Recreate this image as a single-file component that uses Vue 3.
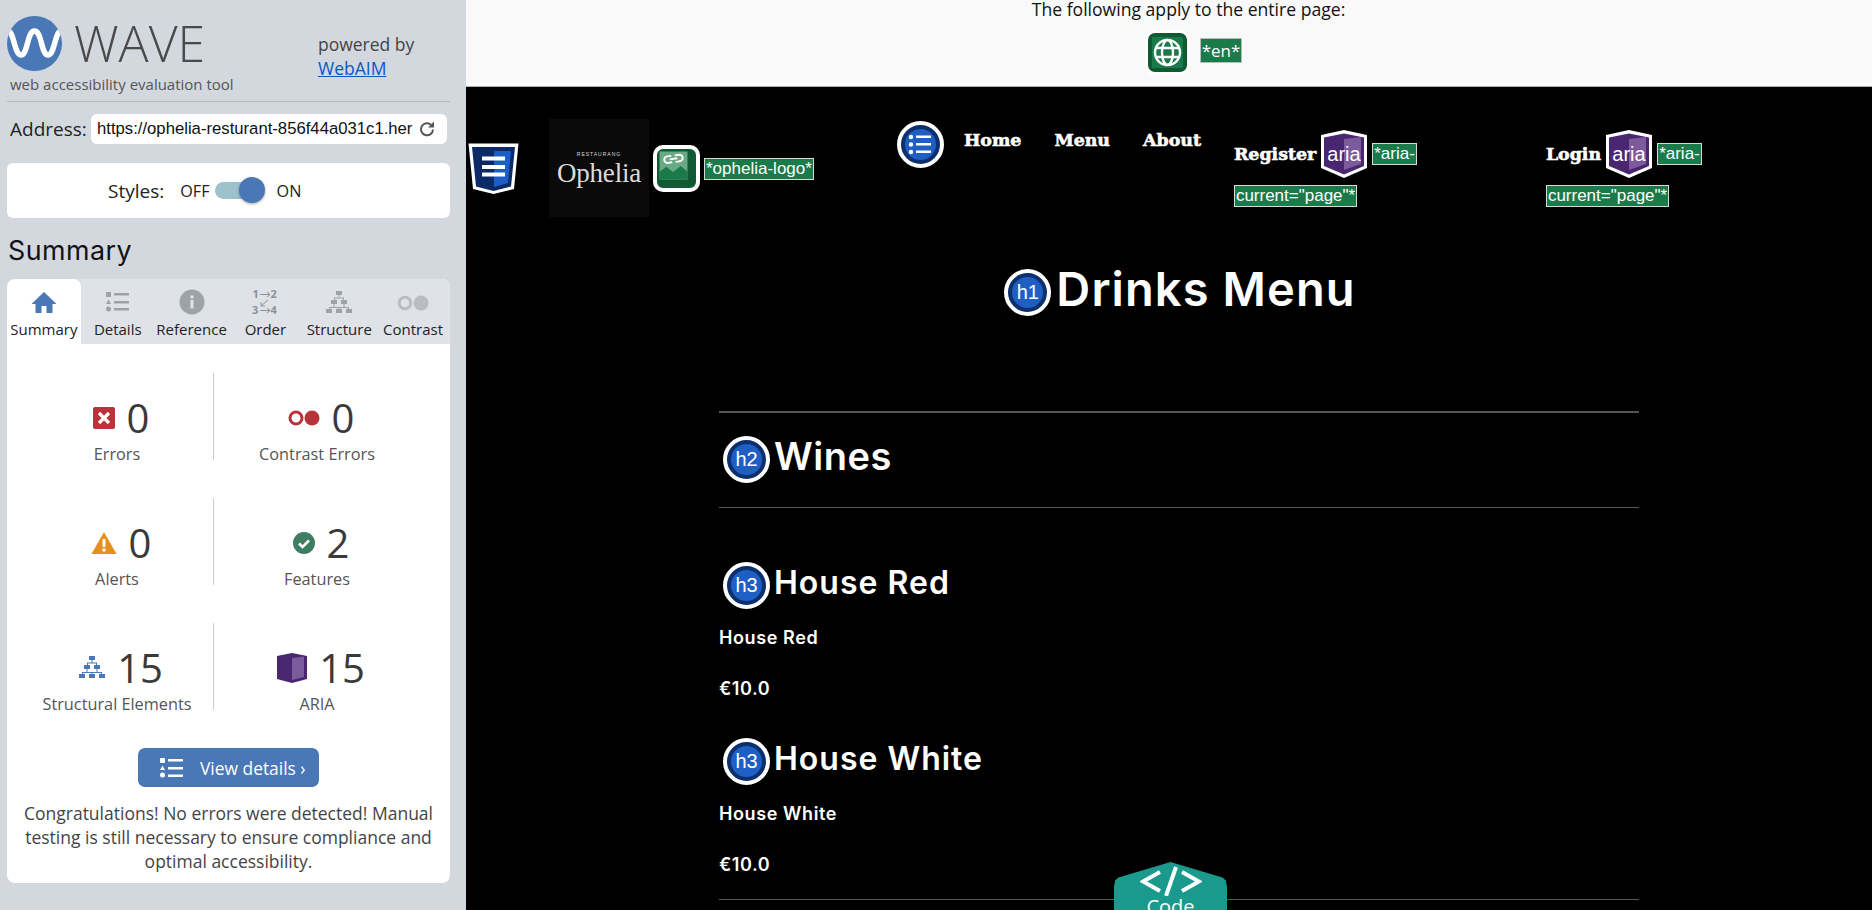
<script setup>
const tabs = ['Summary', 'Details', 'Reference', 'Order', 'Structure', 'Contrast']
</script>

<template>
  <div class="app">
    <aside class="sidebar">
      <div class="brand">
        <div class="brand-left">
          <div class="logo-row">
            <svg class="wave-logo" width="55" height="55" viewBox="0 0 55 55">
              <defs><clipPath id="wc"><circle cx="27.5" cy="27.5" r="27.5" /></clipPath></defs>
              <circle cx="27.5" cy="27.5" r="27.5" fill="#4a77b5" />
              <path clip-path="url(#wc)" d="M0 15 C7 13 7 39 14 39 C21 39 20 15 27.5 15 C35 15 34 39 41 39 C48 39 48 13 55 15" fill="none" stroke="#fff" stroke-width="5.5" />
            </svg>
            <span class="wave-name">WAVE</span>
          </div>
          <div class="tagline">web accessibility evaluation tool</div>
        </div>
        <div class="powered">powered by<br /><a href="#">WebAIM</a></div>
      </div>
      <div class="address-row">
        <span class="address-label">Address:</span>
        <div class="address-box">
          <span class="address-url">https://ophelia-resturant-856f44a031c1.her</span>
          <svg width="18" height="18" viewBox="0 0 18 18"><path d="M15 9.500a6 6 0 1 1-1.900-4.600" fill="none" stroke="#555" stroke-width="2" /><path d="M16 1.500v6h-6z" fill="#555" /></svg>
        </div>
      </div>
      <div class="styles-card">
        <span class="styles-label">Styles:</span>
        <span class="styles-opt">OFF</span>
        <span class="toggle"><span class="knob"></span></span>
        <span class="styles-opt">ON</span>
      </div>
      <h2 class="summary-title">Summary</h2>
      <div class="panel">
        <div class="tabs">
          <div v-for="(tab, idx) in tabs" :key="tab" class="tab" :class="{ active: idx === 0 }">
            <svg v-if="idx === 0" width="26" height="24" viewBox="0 0 26 24"><path d="M13 1 L25.500 13 H21.500 V22 H15.500 V15 H10.500 V22 H4.500 V13 H0.500z" fill="#4a77b5" /></svg>
            <svg v-else-if="idx === 1" width="26" height="24" viewBox="0 0 26 24" fill="#9ea3a8"><rect x="1" y="1" width="5" height="5" /><path d="M3.500 8.500 L6 13 H1z" /><circle cx="3.500" cy="18" r="2.500" /><rect x="9" y="2" width="15" height="2.500" /><rect x="9" y="10" width="15" height="2.500" /><rect x="9" y="17" width="15" height="2.500" /></svg>
            <svg v-else-if="idx === 2" width="26" height="26" viewBox="0 0 26 26"><circle cx="13" cy="13" r="12.500" fill="#9ea3a8" /><rect x="11.500" y="11" width="3" height="8.500" fill="#dfe2e7" /><rect x="11.500" y="6.500" width="3" height="3" fill="#dfe2e7" /></svg>
            <svg v-else-if="idx === 3" class="order-icon" width="26" height="30" viewBox="0 -2 26 30" fill="none" stroke="#8d9298" stroke-width="1"><text x="0.500" y="9" class="order-num">1</text><path d="M8 5.500H18M15 3l3 2.500-3 2.500" /><text x="18.500" y="9" class="order-num">2</text><path d="M16 11 L9 17M9 13v4h4" /><text x="0" y="25" class="order-num">3</text><path d="M8 21.500H18M15 19l3 2.500-3 2.500" /><text x="18.500" y="25" class="order-num">4</text></svg>
            <svg v-else-if="idx === 4" width="26" height="24" viewBox="0 0 26 24" fill="#9ea3a8"><rect x="10" y="0" width="6" height="4" /><rect x="5" y="9" width="6" height="4" /><rect x="15" y="9" width="6" height="4" /><rect x="0" y="18" width="6" height="4" /><rect x="10" y="18" width="6" height="4" /><rect x="20" y="18" width="6" height="4" /><path d="M12.500 4h1v2.500H18V9h-1V7.500H9V9H8V6.500h4.500zM3 16h20v2h-1v-1H13.500v1h-1v-1H4v1H3zM7.500 13h1v3h-1zM17.500 13h1v3h-1z" /></svg>
            <svg v-else class="contrast-icon" width="32" height="16" viewBox="0 0 32 16"><circle cx="8" cy="8" r="5.800" fill="none" stroke="#b9bdc2" stroke-width="3" /><circle cx="24" cy="8" r="7.500" fill="#b9bdc2" /></svg>
            <span class="tab-label">{{ tab }}</span>
          </div>
        </div>
        <div class="stats">
          <div class="stat">
            <div class="stat-top">
              <svg width="22" height="22" viewBox="0 0 22 22"><rect width="22" height="22" rx="2" fill="#b9343a" /><path d="M6 6l10 10M16 6L6 16" stroke="#fff" stroke-width="3.200" /></svg>
              <span class="stat-num">0</span>
            </div>
            <div class="stat-label">Errors</div>
          </div>
          <div class="stat right">
            <div class="stat-top">
              <svg width="32" height="16" viewBox="0 0 32 16"><circle cx="8" cy="8" r="6" fill="none" stroke="#b9343a" stroke-width="3" /><circle cx="24" cy="8" r="7.500" fill="#b9343a" /></svg>
              <span class="stat-num">0</span>
            </div>
            <div class="stat-label">Contrast Errors</div>
          </div>
          <div class="stat">
            <div class="stat-top">
              <svg width="26" height="22" viewBox="0 0 26 22"><path d="M13 0 L25.500 22 H0.500z" fill="#e58f1c" /><rect x="11.500" y="7" width="3" height="8" fill="#fff" /><rect x="11.500" y="16.500" width="3" height="3" fill="#fff" /></svg>
              <span class="stat-num">0</span>
            </div>
            <div class="stat-label">Alerts</div>
          </div>
          <div class="stat right">
            <div class="stat-top">
              <svg width="22" height="22" viewBox="0 0 22 22"><circle cx="11" cy="11" r="11" fill="#3f7d62" /><path d="M6 11.500l3.500 3.500 6.500-6.500" fill="none" stroke="#fff" stroke-width="2.600" /></svg>
              <span class="stat-num">2</span>
            </div>
            <div class="stat-label">Features</div>
          </div>
          <div class="stat">
            <div class="stat-top">
              <svg width="26" height="24" viewBox="0 0 26 24" fill="#4a77b5"><rect x="10" y="0" width="6" height="4" /><rect x="5" y="9" width="6" height="4" /><rect x="15" y="9" width="6" height="4" /><rect x="0" y="18" width="6" height="4" /><rect x="10" y="18" width="6" height="4" /><rect x="20" y="18" width="6" height="4" /><path d="M12.500 4h1v2.500H18V9h-1V7.500H9V9H8V6.500h4.500zM3 16h20v2h-1v-1H13.500v1h-1v-1H4v1H3zM7.500 13h1v3h-1zM17.500 13h1v3h-1z" /></svg>
              <span class="stat-num">15</span>
            </div>
            <div class="stat-label">Structural Elements</div>
          </div>
          <div class="stat right">
            <div class="stat-top">
              <svg width="30" height="30" viewBox="0 0 30 30"><path d="M0 3 L15 0 L30 3 V26 L15 30 L0 26z" fill="#4a2570" /><path d="M15 5 L27 3.500 V24 L15 27z" fill="#7d5a9c" /></svg>
              <span class="stat-num">15</span>
            </div>
            <div class="stat-label">ARIA</div>
          </div>
        </div>
        <div class="btn-row">
          <div class="details-btn">
            <svg width="24" height="20" viewBox="0 0 24 20" fill="#fff"><rect x="0" y="0" width="5" height="5" rx="1" /><path d="M2.500 7.500 L5 12 H0z" /><circle cx="2.500" cy="17" r="2.500" /><rect x="8" y="1" width="15" height="2.500" /><rect x="8" y="9" width="15" height="2.500" /><rect x="8" y="16.500" width="15" height="2.500" /></svg>
            <span>View details ›</span>
          </div>
        </div>
        <p class="congrats">Congratulations! No errors were detected! Manual testing is still necessary to ensure compliance and optimal accessibility.</p>
      </div>
    </aside>

    <main class="page">
      <div class="page-notes">
        <div class="page-notes-title">The following apply to the entire page:</div>
        <div class="page-notes-row">
          <span class="lang-icon">
            <svg width="31" height="31" viewBox="0 0 31 31"><rect width="31" height="31" fill="#1a7a4a" /><g fill="none" stroke="#fff" stroke-width="2.400"><circle cx="15.500" cy="15.500" r="12.500" /><ellipse cx="15.500" cy="15.500" rx="5.500" ry="12.500" /><path d="M3.500 11H27.500M3.500 20H27.500" /></g></svg>
          </span>
          <span class="wave-label lang-label">*en*</span>
        </div>
      </div>

      <div class="site">
        <header class="site-header">
          <svg class="css-icon" width="53" height="53" viewBox="0 0 53 53"><path d="M1.500 1.500H51.500L47 47L26.500 52L6 47z" fill="#fff" /><path d="M5 5H48L44 44.500L26.500 49L9 44.500z" fill="#0b2a66" /><path d="M27 9H44L41 41L27 45z" fill="#1b5ec9" /><rect x="15" y="14.500" width="23" height="4" fill="#fff" /><rect x="15" y="23" width="23" height="4" fill="#fff" /><rect x="15" y="30.500" width="23" height="4" fill="#fff" /></svg>

          <div class="ophelia-logo">
            <span class="ophelia-small">RESTAURANG</span>
            <span class="ophelia-big">Ophelia</span>
          </div>
          <span class="img-icon">
            <svg width="33" height="33" viewBox="0 0 33 33"><rect width="33" height="33" fill="#6aa985" /><path d="M0 33V24L8 18L16 24L25 17L33 24V33z" fill="#1a7a4a" /><g transform="rotate(-8 16 9)"><path d="M14.500 5h-5a3.800 3.800 0 0 0 0 7.600h5M18.500 12.600h5a3.800 3.800 0 0 0 0-7.600h-5M12 8.800h9" fill="none" stroke="#fff" stroke-width="2.200" /></g></svg>
          </span>
          <span class="wave-label logo-label">*ophelia-logo*</span>

          <nav class="site-nav">
            <span class="list-icon">
              <svg width="31" height="31" viewBox="0 0 31 31"><circle cx="15.500" cy="15.500" r="15.500" fill="#1f5fc4" /><circle cx="6" cy="8" r="2.200" fill="#fff" /><circle cx="6" cy="15.500" r="2.200" fill="#fff" /><circle cx="6" cy="23" r="2.200" fill="#fff" /><rect x="11" y="6.500" width="15" height="2.500" fill="#fff" /><rect x="11" y="14" width="15" height="2.500" fill="#fff" /><rect x="11" y="21.500" width="15" height="2.500" fill="#fff" /></svg>
            </span>
            <a class="nav-link home">Home</a>
            <a class="nav-link menu">Menu</a>
            <a class="nav-link about">About</a>
          </nav>

          <div class="nav-item register">
            <div class="nav-line">
              <a class="nav-link">Register</a>
              <svg class="aria-icon" width="48" height="48" viewBox="0 0 48 48"><path d="M1 5 L24 0 L47 5 V38 L24 48 L1 38z" fill="#fff" /><path d="M4 7.500 L24 3.500 L44 7.500 V36 L24 44.500 L4 36z" fill="#4a2570" /><path d="M24 9 L41 7 V34 L24 40z" fill="#7d5a9c" /><text x="24" y="31" text-anchor="middle" class="aria-text">aria</text></svg>
              <span class="wave-label">*aria-</span>
            </div>
            <span class="wave-label second">current="page"*</span>
          </div>

          <div class="nav-item login">
            <div class="nav-line">
              <a class="nav-link">Login</a>
              <svg class="aria-icon" width="48" height="48" viewBox="0 0 48 48"><path d="M1 5 L24 0 L47 5 V38 L24 48 L1 38z" fill="#fff" /><path d="M4 7.500 L24 3.500 L44 7.500 V36 L24 44.500 L4 36z" fill="#4a2570" /><path d="M24 9 L41 7 V34 L24 40z" fill="#7d5a9c" /><text x="24" y="31" text-anchor="middle" class="aria-text">aria</text></svg>
              <span class="wave-label">*aria-</span>
            </div>
            <span class="wave-label second">current="page"*</span>
          </div>
        </header>

        <div class="title-row">
          <span class="hbadge"><span class="hbadge-in">h1</span></span>
          <h1>Drinks Menu</h1>
        </div>

        <section class="menu-section">
          <hr class="rule thick" />
          <div class="head-row h2-row">
            <span class="hbadge"><span class="hbadge-in">h2</span></span>
            <h2>Wines</h2>
          </div>
          <hr class="rule" />
          <div class="head-row h3-row first">
            <span class="hbadge"><span class="hbadge-in">h3</span></span>
            <h3>House Red</h3>
          </div>
          <p class="item-text">House Red</p>
          <p class="item-text price">€10.0</p>
          <div class="head-row h3-row">
            <span class="hbadge"><span class="hbadge-in">h3</span></span>
            <h3>House White</h3>
          </div>
          <p class="item-text">House White</p>
          <p class="item-text price">€10.0</p>
          <hr class="rule end" />
        </section>
      </div>

      <div class="code-tab">
        <svg width="62" height="30" viewBox="0 0 62 30" fill="none" stroke="#fff" stroke-width="4"><path d="M20 6L3 15.500L20 25M42 6L59 15.500L42 25M36 1L26 30" /></svg>
        <span>Code</span>
      </div>
    </main>
  </div>
</template>

<style scoped>
.app {
  display: flex;
  width: 1872px;
  height: 910px;
  overflow: hidden;
  font-family: "Open Sans", sans-serif;
}

.sidebar {
  width: 466px;
  flex: none;
  background: #d3d8df;
  padding: 0 16px 0 7px;
  box-sizing: border-box;
}

.brand {
  display: flex;
  height: 101px;
  border-bottom: 1px solid #b5babf;
  box-sizing: content-box;
}

.brand-left {
  width: 311px;
  padding-top: 16px;
}

.logo-row {
  display: flex;
  align-items: center;
  gap: 12px;
  height: 55px;
}

.wave-name {
  display: block;
  font-size: 50px;
  font-weight: 300;
  color: #4a4a4a;
  line-height: 55px;
}

.tagline {
  margin: 3px 0 0 3px;
  font-size: 15px;
  color: #555;
  line-height: 20px;
}

.powered {
  padding-top: 32px;
  font-size: 17.500px;
  line-height: 24px;
  color: #444;
}

.powered a {
  color: #0b57c9;
}

.address-row {
  display: flex;
  align-items: center;
  height: 30px;
  margin-top: 12px;
  padding-left: 3px;
}

.address-label {
  width: 81px;
  font-size: 19px;
  color: #222;
}

.address-box {
  width: 356px;
  height: 30px;
  padding: 0 11px 0 6px;
  box-sizing: border-box;
  background: #fff;
  border-radius: 6px;
  display: flex;
  align-items: center;
  justify-content: space-between;
  overflow: hidden;
}

.address-url {
  font-family: "Liberation Sans", sans-serif;
  font-size: 16.700px;
  color: #111;
  white-space: nowrap;
}

.styles-card {
  display: flex;
  align-items: center;
  height: 55px;
  margin-top: 19px;
  padding-left: 101px;
  background: #fff;
  border-radius: 6px;
  color: #222;
}

.styles-label {
  font-size: 19px;
  margin-right: 16px;
}

.styles-opt {
  font-size: 16.200px;
}

.toggle {
  position: relative;
  width: 49px;
  height: 17px;
  margin: 0 13px 0 5px;
  background: #9fc0cd;
  border-radius: 9px;
}

.knob {
  position: absolute;
  right: -1px;
  top: -5px;
  width: 26px;
  height: 26px;
  border-radius: 50%;
  background: #4a77b5;
  box-shadow: 0 1px 3px rgba(0, 0, 0, 0.35);
}

.summary-title {
  margin: 14px 0 10px 1px;
  font-size: 26.800px;
  line-height: 37px;
  font-weight: 400;
  color: #111;
}

.panel {
  height: 604px;
  background: #fff;
  border-radius: 8px;
  overflow: hidden;
}

.tabs {
  display: grid;
  grid-template-columns: repeat(6, 1fr);
  height: 65px;
  background: #dfe2e7;
}

.tab {
  position: relative;
  display: flex;
  flex-direction: column;
  align-items: center;
  justify-content: flex-end;
  gap: 2px;
  padding-bottom: 5px;
}

.tab.active {
  background: #fff;
  border-radius: 8px 8px 0 0;
}

.tab svg {
  display: block;
  margin-bottom: 2px;
}

.tab svg.order-icon {
  margin: -4px 0 0;
}

.tab svg.contrast-icon {
  margin: 0 0 6px;
}

.tab-label {
  font-size: 15px;
  line-height: 20px;
  color: #222;
  white-space: nowrap;
}

.order-num {
  font-family: "Open Sans", sans-serif;
  font-size: 11px;
  font-weight: 700;
  fill: #8d9298;
  stroke: none;
}

.stats {
  display: grid;
  grid-template-columns: 193px 206px;
  grid-auto-rows: 87px;
  row-gap: 38px;
  margin: 29px 0 0 14px;
}

.stat {
  display: flex;
  flex-direction: column;
  align-items: center;
  padding-top: 25px;
  box-sizing: border-box;
  border-right: 1px solid #ccc;
}

.stat.right {
  border-right: 0;
}

.stat-top {
  display: flex;
  align-items: center;
  justify-content: center;
  gap: 12px;
  height: 40px;
  padding-left: 8px;
  color: #3a3a3a;
}

.stat-num {
  font-size: 40px;
  line-height: 40px;
}

.stat-label {
  margin: 5px 0 0;
  font-size: 16.300px;
  line-height: 22px;
  color: #555;
}

.btn-row {
  display: flex;
  justify-content: center;
  margin-top: 38px;
}

.details-btn {
  display: flex;
  align-items: center;
  gap: 16px;
  width: 181px;
  height: 39px;
  padding-left: 22px;
  box-sizing: border-box;
  background: #4a77b5;
  border-radius: 7px;
  font-size: 17.400px;
  color: #fff;
}

.congrats {
  margin: 14px 0 0;
  padding: 0 12px;
  text-align: center;
  font-size: 17.500px;
  line-height: 24px;
  color: #444;
}

.page {
  position: relative;
  flex: 1;
  background: #000;
  overflow: hidden;
}

.page-notes {
  height: 86px;
  background: #f9f9f9;
  border-bottom: 1px solid #a9b0a9;
  box-sizing: content-box;
  padding-left: 40px;
  text-align: center;
  color: #111;
}

.page-notes-title {
  font-size: 17.600px;
  line-height: 18px;
  margin-left: -1px;
}

.page-notes-row {
  display: flex;
  align-items: center;
  justify-content: center;
  gap: 10px;
  height: 49px;
  margin-top: 10px;
  padding-left: 9px;
}

.lang-icon {
  display: flex;
  align-items: center;
  justify-content: center;
  width: 45px;
  height: 45px;
  box-sizing: border-box;
  background: #0f5a32;
  border: 3px solid #fff;
  border-radius: 10px;
}

.wave-label {
  display: inline-block;
  padding: 0 1px;
  background: #1a7a4a;
  border: 1px solid #d9d9d9;
  font-family: "Liberation Sans", sans-serif;
  font-size: 17px;
  line-height: 20px;
  font-weight: 400;
  color: #fff;
  white-space: nowrap;
}

.lang-label {
  margin-top: -4px;
  border-color: #bbb;
  font-family: "Open Sans", sans-serif;
  font-size: 17px;
  line-height: 23px;
}

.site-header {
  display: flex;
  align-items: flex-start;
  height: 153px;
}

.css-icon {
  flex: none;
  margin: 55px 0 0 1px;
}

.ophelia-logo {
  display: flex;
  flex-direction: column;
  align-items: center;
  justify-content: center;
  flex: none;
  width: 100px;
  height: 98px;
  margin: 32px 0 0 29px;
  box-sizing: border-box;
  background: #0a0a0a;
  color: #dcdcdc;
  font-family: "Liberation Serif", serif;
}

.ophelia-small {
  font-size: 5px;
  line-height: 9px;
  letter-spacing: 1px;
  font-family: "Liberation Sans", sans-serif;
}

.ophelia-big {
  font-size: 27px;
  line-height: 28px;
  letter-spacing: -0.200px;
}

.img-icon {
  display: flex;
  flex: none;
  width: 47px;
  height: 47px;
  margin: 58px 0 0 4px;
  box-sizing: border-box;
  padding: 3px;
  background: #0f5a32;
  border: 4px solid #fff;
  border-radius: 10px;
}

.img-icon svg {
  width: 33px;
  height: 33px;
  margin: -3px;
  transform: scale(0.86);
}

.logo-label {
  margin: 71px 0 0 4px;
}

.site-nav {
  display: flex;
  align-items: flex-start;
  flex: none;
  width: 337px;
  margin: 34px 0 0 83px;
}

.list-icon {
  display: flex;
  align-items: center;
  justify-content: center;
  width: 47px;
  height: 47px;
  box-sizing: border-box;
  background: #0c2f6e;
  border: 4px solid #fff;
  border-radius: 50%;
  flex: none;
}

.nav-link {
  font-family: "DejaVu Serif", serif;
  font-size: 17.400px;
  font-weight: 700;
  line-height: 20px;
  color: #fff;
  -webkit-text-stroke: 0.600px #fff;
}

.home {
  margin: 9px 0 0 20px;
}

.menu {
  margin: 9px 0 0 33px;
}

.about {
  margin: 9px 0 0 33px;
}

.nav-item {
  display: flex;
  flex-direction: column;
  align-items: flex-start;
  flex: none;
  margin-top: 43px;
  width: 312px;
}

.nav-line {
  display: flex;
  align-items: center;
  gap: 4px;
}

.login {
  width: 200px;
}

.aria-text {
  font-family: "Liberation Sans", sans-serif;
  font-size: 20px;
  fill: #fff;
}

.second {
  margin-top: 7px;
}

.title-row {
  display: flex;
  align-items: center;
  justify-content: center;
  gap: 5px;
  height: 48px;
  margin-top: 28px;
  padding-left: 22px;
}

h1,
h2,
h3 {
  margin: 0 0 8px;
  font-family: "Inter", sans-serif;
  font-weight: 600;
  color: #fff;
}

h1 {
  font-size: 47px;
  letter-spacing: 1.100px;
}

h2 {
  font-size: 38px;
  letter-spacing: 0.500px;
}

h3 {
  font-size: 32px;
  margin-bottom: 6px;
  letter-spacing: 1px;
}

.hbadge {
  display: flex;
  align-items: center;
  justify-content: center;
  flex: none;
  width: 47px;
  height: 47px;
  box-sizing: border-box;
  background: #0c2f6e;
  border: 4px solid #fff;
  border-radius: 50%;
}

.hbadge-in {
  display: flex;
  align-items: center;
  justify-content: center;
  width: 31px;
  height: 31px;
  background: #1f5fc4;
  border-radius: 50%;
  font-family: "Liberation Sans", sans-serif;
  font-size: 20px;
  color: #fff;
}

.menu-section {
  width: 920px;
  margin: 95px 0 0 253px;
}

.rule {
  margin: 0;
  height: 1px;
  border: 0;
  background: #555;
}

.rule.thick {
  height: 2px;
}

.head-row {
  display: flex;
  align-items: center;
  gap: 4px;
  padding-left: 4px;
}

.h2-row {
  height: 47px;
  margin: 23px 0 24px;
}

.h3-row {
  height: 47px;
  margin-top: 37px;
}

.h3-row.first {
  margin-top: 54px;
}

.item-text {
  margin: 17px 0 0 0;
  font-family: "Inter", sans-serif;
  font-size: 18px;
  line-height: 24px;
  font-weight: 600;
  letter-spacing: 0.600px;
  color: #fff;
}

.price {
  margin-top: 27px;
}

.rule.end {
  margin-top: 22px;
}

.code-tab {
  position: absolute;
  left: 648px;
  top: 862px;
  width: 113px;
  height: 60px;
  background: #1a9a8c;
  clip-path: polygon(50% 0, 96% 26%, 99% 31%, 100% 42%, 100% 100%, 0 100%, 0 42%, 1% 31%, 4% 26%);
  display: flex;
  flex-direction: column;
  align-items: center;
  padding-top: 4px;
  box-sizing: border-box;
  color: #fff;
  font-size: 20px;
  line-height: 22px;
}
</style>

<style>
html,
body {
  margin: 0;
  overflow: hidden;
}
</style>
